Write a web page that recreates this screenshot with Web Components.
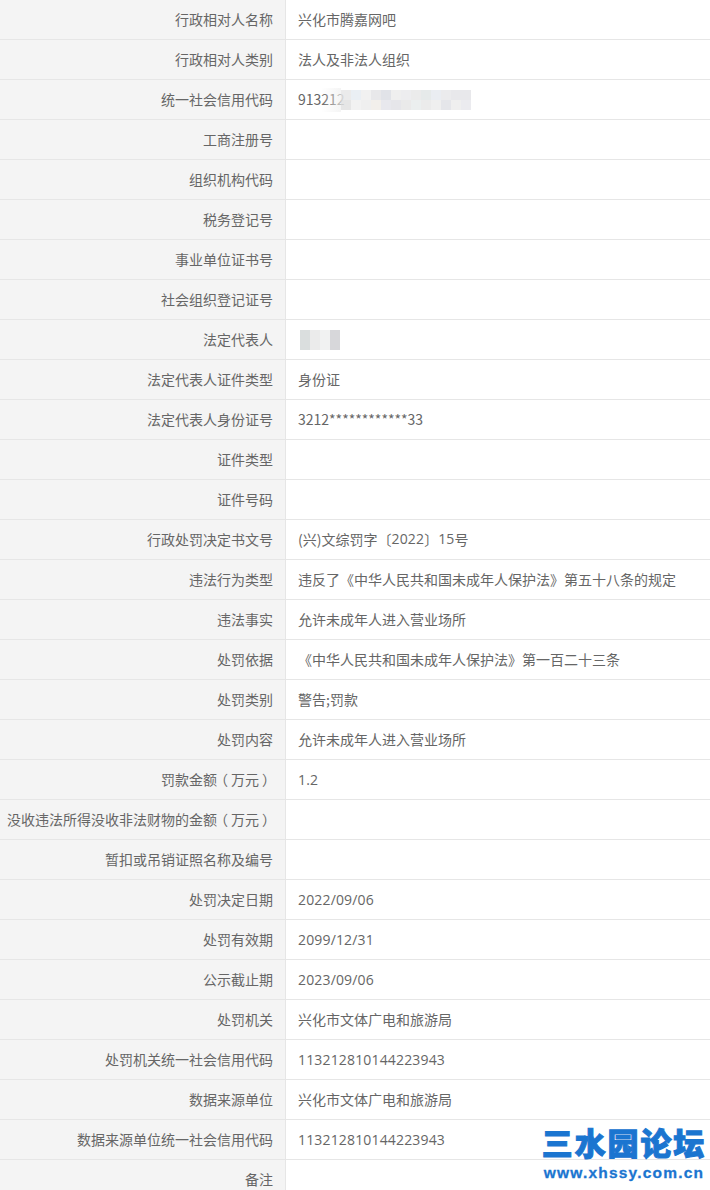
<!DOCTYPE html>
<html lang="zh">
<head>
<meta charset="utf-8">
<style>
    html, body { margin: 0; padding: 0; height: 1190px; overflow: hidden; background: white; }
    body { font: 14px "Noto Sans CJK SC", "Liberation Sans", sans-serif; color: #666; }
    .num { font-family: "Open Sans", "Noto Sans CJK SC", sans-serif; letter-spacing: .16px; }
</style>
</head>
<body>
<info-table>
    <info-row label="行政相对人名称">兴化市腾嘉网吧</info-row>
    <info-row label="行政相对人类别">法人及非法人组织</info-row>
    <info-row label="统一社会信用代码">913212<mosaic-patch class="code" rows="2" cells="e8e8e8,e2e2e2,e6ecf2,f0f0f0,eeeeee,ececec,e4e4e6,f0ece8,dcdee4,e4e4ea,ececec,e2e2e6,eaeaec,e6e6e6,e8e8e8,e8ecec,e2e6e6,e8e8e8,e6eaf0,ececec,e8e8ea,e0e2e6,e4e4e8,ececec,e4e4e8,e8e8ec"></mosaic-patch></info-row>
    <info-row label="工商注册号"></info-row>
    <info-row label="组织机构代码"></info-row>
    <info-row label="税务登记号"></info-row>
    <info-row label="事业单位证书号"></info-row>
    <info-row label="社会组织登记证号"></info-row>
    <info-row label="法定代表人"><mosaic-patch class="name" rows="1" cells="d4d8d8,e8e8e8,eef0f0,d0d0d4"></mosaic-patch></info-row>
    <info-row label="法定代表人证件类型">身份证</info-row>
    <info-row label="法定代表人身份证号">3212************33</info-row>
    <info-row label="证件类型"></info-row>
    <info-row label="证件号码"></info-row>
    <info-row label="行政处罚决定书文号">(兴)文综罚字〔<span class="num">2022</span>〕<span class="num">15</span>号</info-row>
    <info-row label="违法行为类型">违反了《中华人民共和国未成年人保护法》第五十八条的规定</info-row>
    <info-row label="违法事实">允许未成年人进入营业场所</info-row>
    <info-row label="处罚依据">《中华人民共和国未成年人保护法》第一百二十三条</info-row>
    <info-row label="处罚类别">警告;罚款</info-row>
    <info-row label="处罚内容">允许未成年人进入营业场所</info-row>
    <info-row label="罚款金额（万元）" latin>1.2</info-row>
    <info-row label="没收违法所得没收非法财物的金额（万元）"></info-row>
    <info-row label="暂扣或吊销证照名称及编号"></info-row>
    <info-row label="处罚决定日期" latin>2022/09/06</info-row>
    <info-row label="处罚有效期" latin>2099/12/31</info-row>
    <info-row label="公示截止期" latin>2023/09/06</info-row>
    <info-row label="处罚机关">兴化市文体广电和旅游局</info-row>
    <info-row label="处罚机关统一社会信用代码" latin>113212810144223943</info-row>
    <info-row label="数据来源单位">兴化市文体广电和旅游局</info-row>
    <info-row label="数据来源单位统一社会信用代码" latin>113212810144223943</info-row>
    <info-row label="备注"></info-row>
</info-table>
<site-watermark></site-watermark>

<script>
(() => {
    const FONT = `"Noto Sans CJK SC", "Liberation Sans", sans-serif`

    customElements.define("info-table", class extends HTMLElement {
        constructor(){
            super()
            this.attachShadow({mode: 'open'}).innerHTML = `
                <style>
                    :host { display: block; width: 710px; }
                </style>
                <slot></slot>
            `
        }
    })

    customElements.define("info-row", class extends HTMLElement {
        constructor(){
            super()
            this.attachShadow({mode: 'open'}).innerHTML = `
                <style>
                    :host {
                        display: grid;
                        grid-template-columns: 286px 1fr;
                        height: 40px;
                        box-sizing: border-box;
                        border-bottom: 1px solid #e6e6e6;
                        font: 14px/20px ${FONT};
                        color: #666;
                    }
                    .label {
                        background: #f4f4f4;
                        border-right: 1px solid #e6e6e6;
                        padding: 0 12px 2px 0;
                        display: flex;
                        align-items: center;
                        justify-content: flex-end;
                        white-space: nowrap;
                    }
                    .value {
                        padding: 0 0 2px 12px;
                        display: flex;
                        align-items: center;
                        white-space: nowrap;
                    }
                    :host([latin]) .value {
                        font-family: "Open Sans", ${FONT};
                        letter-spacing: .16px;
                        padding-bottom: 0;
                    }
                    /* parenthèses centrées dans leur carré, comme dans le modèle */
                    .paren {
                        font-feature-settings: "palt";
                        padding: 0 3.5px;
                    }
                </style>
                <div class="label"><span></span></div>
                <div class="value"><slot></slot></div>
            `
            this.shadowRoot.querySelector(".label span").innerHTML = this.getAttribute("label")
                .replace(/[（）]/g, c => `<span class="paren">${c}</span>`)
        }
    })

    // mosaïque qui cache une donnée personnelle
    customElements.define("mosaic-patch", class extends HTMLElement {
        constructor(){
            super()
            let cells = (this.getAttribute("cells") || "").split(",")
            let rows = this.getAttribute("rows") || 1
            this.attachShadow({mode: 'open'}).innerHTML = `
                <style>
                    :host {
                        display: inline-grid;
                        grid-auto-flow: column;
                        grid-template-rows: repeat(${rows}, 1fr);
                        grid-auto-columns: 10px;
                        height: 20px;
                        position: relative;
                    }
                    :host(.name) { margin: 2px 0 0 2px; }
                    :host(.code) { margin: 2px 0 0 -4px; }
                    :host(.code)::before {
                        content: "";
                        position: absolute;
                        left: -20px;
                        top: -2px;
                        width: 20px;
                        height: 24px;
                        background: linear-gradient(to right, rgba(255,255,255,0), rgba(240,240,240,.7));
                    }
                    i { display: block; opacity: .85; }
                </style>
                ${cells.map(c => `<i style="background:#${c}"></i>`).join("")}
            `
        }
    })

    customElements.define("site-watermark", class extends HTMLElement {
        constructor(){
            super()
            this.attachShadow({mode: 'open'}).innerHTML = `
                <style>
                    :host {
                        position: absolute;
                        left: 541px;
                        top: 1123px;
                        width: 166px;
                        color: #1b75d0;
                        text-align: center;
                        white-space: nowrap;
                    }
                    .name {
                        font: 900 31px/38px "Noto Sans CJK SC", sans-serif;
                        letter-spacing: 1.9px;
                        -webkit-text-stroke: 1px #1b75d0;
                    }
                    .url {
                        font: bold 15.5px/18px "Liberation Sans", sans-serif;
                        letter-spacing: 1.2px;
                        margin-top: 3px;
                        -webkit-text-stroke: .3px #1b75d0;
                    }
                </style>
                <div class="name">三水园论坛</div>
                <div class="url">www.xhssy.com.cn</div>
            `
        }
    })
})()
</script>
</body>
</html>
